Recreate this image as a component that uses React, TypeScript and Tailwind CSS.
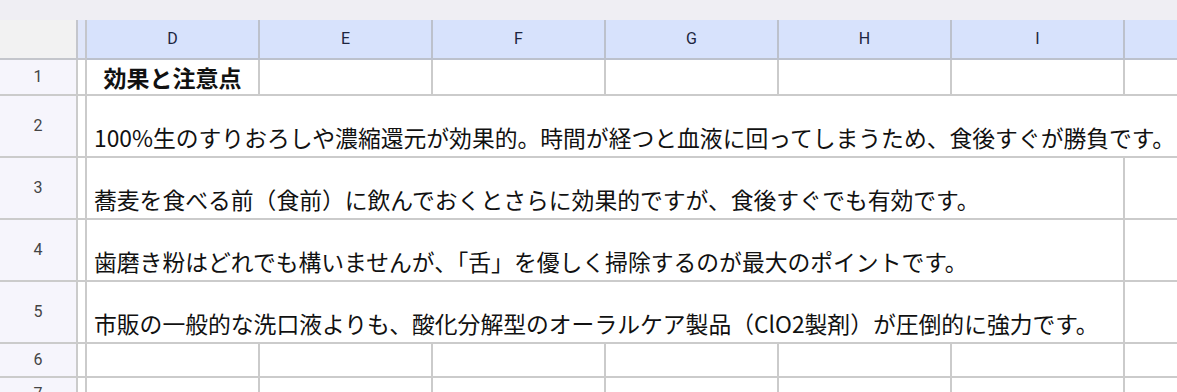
import React from "react";

const cols = ["D", "E", "F", "G", "H", "I"];

const notes = [
  { row: 2, text: "100%生のすりおろしや濃縮還元が効果的。時間が経つと血液に回ってしまうため、食後すぐが勝負です。", wide: true },
  { row: 3, text: "蕎麦を食べる前（食前）に飲んでおくとさらに効果的ですが、食後すぐでも有効です。", wide: false },
  { row: 4, text: "歯磨き粉はどれでも構いませんが、「舌」を優しく掃除するのが最大のポイントです。", wide: false },
  { row: 5, text: "市販の一般的な洗口液よりも、酸化分解型のオーラルケア製品（ClO2製剤）が圧倒的に強力です。", wide: false },
];

function RowHead({ n, h }: { n: number; h: string }) {
  return (
    <>
      <div className={`w-[78px] shrink-0 ${h} flex items-center justify-center bg-[#f6f5fc] border-r-2 border-b-2 border-[#cbcbcb] text-[16px] text-[#444] font-['Roboto',sans-serif]`}>
        {n}
      </div>
      <div className={`w-[9px] shrink-0 ${h} bg-white border-r-2 border-b-2 border-[#cbcbcb]`} />
    </>
  );
}

export default function App() {
  return (
    <div className="w-[1177px] h-[392px] overflow-hidden bg-white font-['Noto_Sans_CJK_JP',sans-serif] text-[#111]">
      <div className="h-[20px] bg-[#efeef3]" />

      {/* column headers */}
      <div className="flex h-[40px]">
        <div className="w-[78px] shrink-0 bg-[#f2f2f2] border-r-2 border-b-2 border-[#c4c6cc]" />
        <div className="w-[9px] shrink-0 bg-[#dfe6fa] border-r-2 border-b-2 border-[#c4c6cc]" />
        {cols.map((c) => (
          <div
            key={c}
            className="w-[173px] shrink-0 flex items-center justify-center bg-[#d7e2fc] border-r-2 border-b-2 border-[#bcc1cc] text-[16px] text-[#1c2540] font-['Roboto',sans-serif]"
          >
            {c}
          </div>
        ))}
        <div className="flex-1 bg-[#d7e2fc] border-b-2 border-[#bcc1cc]" />
      </div>

      {/* row 1 */}
      <div className="flex h-[36px]">
        <RowHead n={1} h="h-[36px]" />
        {cols.map((c, i) => (
          <div key={c} className="w-[173px] shrink-0 flex items-center justify-center border-r-2 border-b-2 border-[#cbcbcb]">
            {i === 0 && <span className="text-[23px] font-bold leading-none">効果と注意点</span>}
          </div>
        ))}
        <div className="flex-1 border-b-2 border-[#cbcbcb]" />
      </div>

      {/* merged note rows */}
      {notes.map((r) => (
        <div key={r.row} className="flex h-[62px]">
          <RowHead n={r.row} h="h-[62px]" />
          <div
            className={`${r.wide ? "flex-1" : "w-[1038px] border-r-2"} shrink-0 flex items-end pl-[7px] pb-[3px] border-b-2 border-[#cbcbcb] whitespace-nowrap overflow-hidden`}
          >
            <span className="text-[22.8px] leading-[30px]">{r.text}</span>
          </div>
          {!r.wide && <div className="flex-1 border-b-2 border-[#cbcbcb]" />}
        </div>
      ))}

      {/* empty rows */}
      {[6, 7].map((n) => (
        <div key={n} className="flex h-[34px]">
          <RowHead n={n} h="h-[34px]" />
          {cols.map((c) => (
            <div key={c} className="w-[173px] shrink-0 h-[34px] border-r-2 border-b-2 border-[#cbcbcb]" />
          ))}
          <div className="flex-1 border-b-2 border-[#cbcbcb]" />
        </div>
      ))}
    </div>
  );
}
